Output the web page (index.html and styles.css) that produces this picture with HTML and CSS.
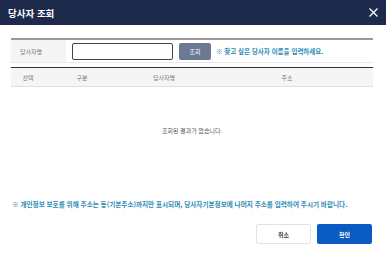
FILE: index.html
```html
<!DOCTYPE html>
<html lang="ko">
<head>
    <meta charset="UTF-8">
    <meta name="viewport" content="width=device-width, initial-scale=1.0">
    <title>당사자 조회</title>
    <link rel="stylesheet" href="styles.css">
</head>
<body>
    <div class="modal">
        <div class="modal-header">
            <div class="modal-title">당사자 조회</div>
            <button class="close-button" aria-label="닫기">
                <svg width="9" height="9" viewBox="0 0 9 9">
                    <path d="M0.5 0.5 L8.5 8.5 M8.5 0.5 L0.5 8.5" stroke="#ffffff" stroke-width="1.3" fill="none"/>
                </svg>
            </button>
        </div>

        <div class="modal-body">
            <!-- 검색 영역 -->
            <div class="search-row">
                <div class="search-label">당사자명</div>
                <input class="search-input" type="text">
                <button class="button search-button">조회</button>
                <div class="search-hint">※ 찾고 싶은 당사자 이름을 입력하세요.</div>
            </div>

            <!-- 결과 목록 -->
            <div class="result-table">
                <div class="result-head">
                    <div>선택</div>
                    <div>구분</div>
                    <div>당사자명</div>
                    <div>주소</div>
                    <div></div>
                </div>
                <div class="result-empty">조회된 결과가 없습니다.</div>
            </div>

            <div class="notice">※ 개인정보 보호를 위해 주소는 동(기본주소)까지만 표시되며, 당사자기본정보에 나머지 주소를 입력하여 주시기 바랍니다.</div>

            <div class="footer-buttons">
                <button class="button cancel-button">취소</button>
                <button class="button confirm-button">확인</button>
            </div>
        </div>
    </div>
</body>
</html>
```

FILE: styles.css
```css
body, html {
    margin: 0;
    padding: 0;
    width: 100%;
    height: 100%;
    background-color: #ffffff;
    font-family: "Noto Sans CJK KR", "Noto Sans", sans-serif;
    overflow: hidden;
}

.modal {
    display: flex;
    flex-direction: column;
    width: 386px;
    height: 259px;
}

/* 상단 헤더 */
.modal-header {
    display: flex;
    align-items: center;
    justify-content: space-between;
    height: 25px;
    padding: 0 8px;
    background-color: #1d2a4c;
}

.modal-title {
    font-size: 9.5px;
    font-weight: bold;
    color: #ffffff;
}

.close-button {
    display: flex;
    padding: 0;
    border: none;
    background: none;
    cursor: pointer;
}

.modal-body {
    padding: 13px 13px 0 11px;
}

.button {
    border: none;
    border-radius: 2px;
    font-family: inherit;
    cursor: pointer;
}

/* 검색 영역 */
.search-row {
    display: flex;
    align-items: center;
    height: 22px;
    border-top: 2px solid #9a9a9a;
    border-bottom: 1px solid #e8e8e8;
}

.search-label {
    display: flex;
    align-items: center;
    align-self: stretch;
    width: 46px;
    padding-left: 9px;
    background-color: #f5f5f5;
    font-size: 6px;
    color: #777;
}

.search-input {
    box-sizing: border-box;
    width: 101px;
    height: 17px;
    margin-left: 6px;
    border: 1px solid #444;
    border-radius: 2px;
    padding: 0 4px;
    font-size: 7px;
}

.search-button {
    width: 32px;
    height: 17px;
    margin-left: 6px;
    padding: 0;
    background-color: #6b7993;
    color: #ffffff;
    font-size: 6px;
}

.search-hint {
    margin-left: 5px;
    font-size: 6.5px;
    font-weight: bold;
    color: #2e8db5;
}

/* 결과 목록 */
.result-table {
    margin-top: 4px;
    border-top: 1px solid #333;
}

.result-head {
    display: grid;
    grid-template-columns: 34px 74px 90px 156px 1fr;
    align-items: center;
    height: 18px;
    background-color: #f5f5f5;
    border-bottom: 1px solid #e0e0e0;
    font-size: 6px;
    color: #777;
    text-align: center;
}

.result-empty {
    display: flex;
    align-items: center;
    justify-content: center;
    height: 86px;
    font-size: 6px;
    color: #555;
}

.notice {
    margin-top: 26px;
    padding-left: 1px;
    font-size: 6.6px;
    font-weight: bold;
    color: #2e8db5;
    white-space: nowrap;
}

.footer-buttons {
    display: flex;
    justify-content: flex-end;
    gap: 6px;
    margin-top: 15px;
    padding-right: 1px;
}

.cancel-button,
.confirm-button {
    width: 55px;
    height: 20px;
    font-size: 6px;
    font-weight: bold;
}

.cancel-button {
    background-color: #ffffff;
    border: 1px solid #e3e3e3;
    color: #333;
}

.confirm-button {
    background-color: #0b5cc2;
    color: #ffffff;
}
```
